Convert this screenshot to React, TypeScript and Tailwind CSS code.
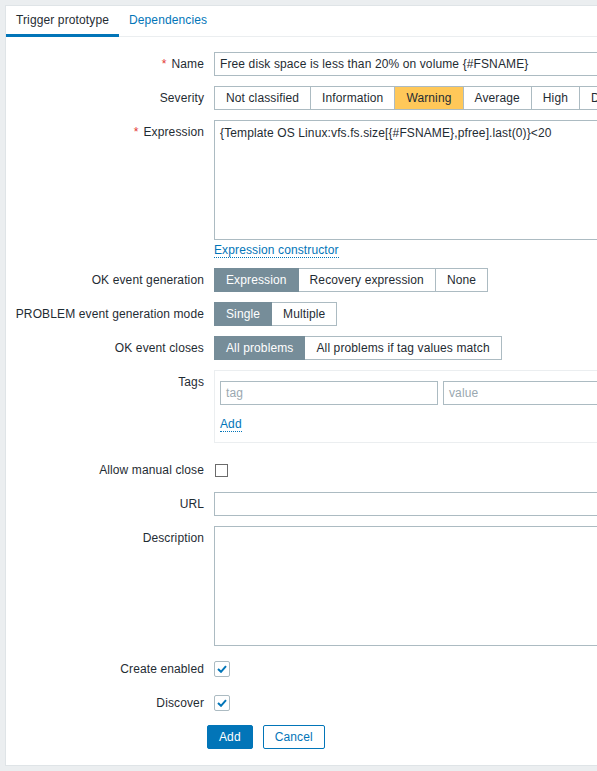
import React from "react";

const font = { fontFamily: '"Liberation Sans", Arial, sans-serif', letterSpacing: "0.12px" };

function Row({
  label,
  required,
  children,
  className = "",
}: {
  label: string;
  required?: boolean;
  children: React.ReactNode;
  className?: string;
}) {
  return (
    <div className={`flex pt-[5px] ${className || "pb-[5px]"}`}>
      <div className="w-[208px] shrink-0 pr-[10px] text-right leading-[24px] whitespace-nowrap">
        {required && <span className="text-[#e33734] mr-[5px]">*</span>}
        {label}
      </div>
      <div className="min-w-0">{children}</div>
    </div>
  );
}

function Radios({ items, active }: { items: string[]; active: number }) {
  return (
    <div className="flex whitespace-nowrap">
      {items.map((it, i) => (
        <div
          key={it}
          className={`h-[24px] px-[11px] leading-[22px] border ${i > 0 ? "-ml-px" : ""} ${
            i === active
              ? "bg-[#768d99] border-[#768d99] text-white relative"
              : "bg-white border-[#acbbc2] text-[#1f2c33]"
          }`}
        >
          {it}
        </div>
      ))}
    </div>
  );
}

function Severity() {
  const items = ["Not classified", "Information", "Warning", "Average", "High", "Disaster"];
  return (
    <div className="flex whitespace-nowrap">
      {items.map((it, i) => (
        <div
          key={it}
          className={`h-[24px] px-[11px] leading-[22px] border border-[#acbbc2] ${i > 0 ? "-ml-px" : ""} ${
            it === "Warning" ? "bg-[#ffc859] border-[#8c9ba3] relative" : "bg-white"
          }`}
        >
          {it}
        </div>
      ))}
    </div>
  );
}

function Checked() {
  return (
    <div className="flex h-[24px] items-center">
      <div className="w-[16px] h-[16px] border border-[#acbbc2] rounded-[2px] bg-white flex items-center justify-center">
        <svg width="10" height="8" viewBox="0 0 10 8">
          <path d="M1 4 L4 6.8 L9 1.2" fill="none" stroke="#0275b8" strokeWidth="2" />
        </svg>
      </div>
    </div>
  );
}

export default function App() {
  return (
    <div
      className="w-[597px] h-[771px] overflow-hidden bg-[#ebeef0] p-[5px] text-[12px] text-[#1f2c33]"
      style={font}
    >
      <div className="w-[760px] h-[761px] bg-white border border-[#dfe4e7]">
        <div className="flex h-[31px] border-b border-[#ebeef0]">
          <div className="px-[10px] leading-[29px] border-b-[3px] border-[#0275b8] -mb-px">
            Trigger prototype
          </div>
          <div className="px-[10px] leading-[29px] text-[#0275b8]">Dependencies</div>
        </div>

        <div className="pt-[10px]">
          <Row label="Name" required>
            <div className="w-[453px] h-[24px] border border-[#acbbc2] px-[5px] leading-[22px] whitespace-nowrap">
              Free disk space is less than 20% on volume {"{#FSNAME}"}
            </div>
          </Row>
          <Row label="Severity">
            <Severity />
          </Row>
          <Row label="Expression" required className="pb-[6px]">
            <div className="w-[453px] h-[120px] border border-[#acbbc2] px-[5px] pt-[5px] leading-[14px] whitespace-nowrap">
              {"{Template OS Linux:vfs.fs.size[{#FSNAME},pfree].last(0)}<20"}
            </div>
            <div className="pt-[3px] leading-[14px]">
              <span className="text-[#0275b8] border-b border-dotted border-[#0275b8]">
                Expression constructor
              </span>
            </div>
          </Row>
          <Row label="OK event generation">
            <Radios items={["Expression", "Recovery expression", "None"]} active={0} />
          </Row>
          <Row label="PROBLEM event generation mode">
            <Radios items={["Single", "Multiple"]} active={0} />
          </Row>
          <Row label="OK event closes">
            <Radios items={["All problems", "All problems if tag values match"]} active={0} />
          </Row>
          <Row label="Tags" className="pb-[10px]">
            <div className="w-[500px] border border-[#ebeef0] px-[5px] pt-[10px] pb-[11px]">
              <div className="flex gap-[5px]">
                <div className="w-[218px] h-[24px] border border-[#acbbc2] px-[5px] leading-[22px] text-[#9aa8b0]">
                  tag
                </div>
                <div className="w-[218px] h-[24px] border border-[#acbbc2] px-[5px] leading-[22px] text-[#9aa8b0]">
                  value
                </div>
              </div>
              <div className="pt-[12px] leading-[14px]">
                <span className="text-[#0275b8] border-b border-dotted border-[#0275b8]">Add</span>
              </div>
            </div>
          </Row>
          <Row label="Allow manual close">
            <div className="flex h-[24px] items-center pl-px">
              <div className="w-[13px] h-[13px] border border-[#6b6b6b] bg-white" />
            </div>
          </Row>
          <Row label="URL">
            <div className="w-[453px] h-[24px] border border-[#acbbc2]" />
          </Row>
          <Row label="Description" className="pb-[6px]">
            <div className="w-[453px] h-[120px] border border-[#acbbc2]" />
          </Row>
          <Row label="Create enabled">
            <Checked />
          </Row>
          <Row label="Discover">
            <Checked />
          </Row>
          <div className="flex gap-[10px] pl-[201px] pt-[5px]">
            <div className="h-[24px] px-[11px] leading-[22px] border border-[#0275b8] bg-[#0275b8] text-white rounded-[2px]">
              Add
            </div>
            <div className="h-[24px] px-[11px] leading-[22px] border border-[#0275b8] bg-white text-[#0275b8] rounded-[2px]">
              Cancel
            </div>
          </div>
        </div>
      </div>
    </div>
  );
}
